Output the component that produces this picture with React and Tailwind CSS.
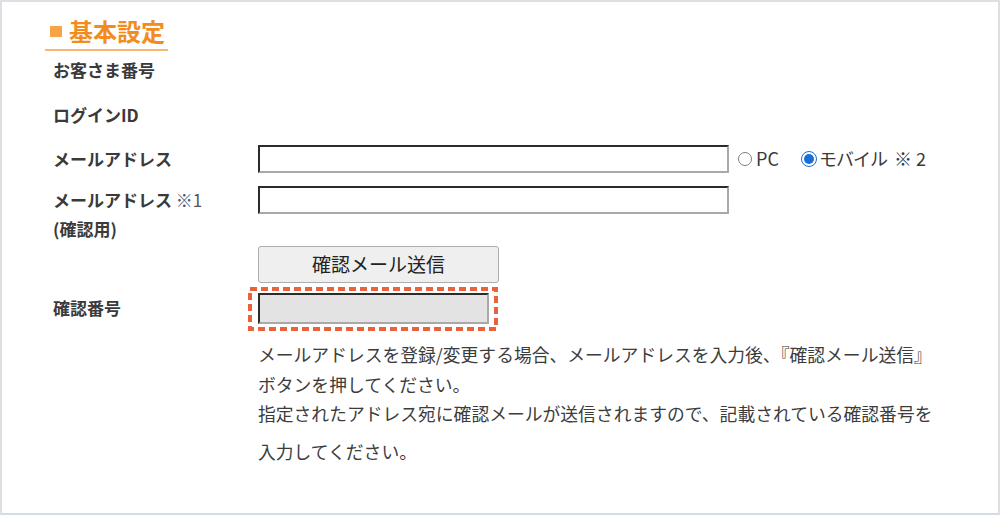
import React from "react";

const jp = { fontFamily: '"Noto Sans CJK JP", "Noto Sans", sans-serif' };

const Field = ({ className = "" }) => (
  <div
    className={`h-[28px] border-2 border-t-[#2b2b2b] border-l-[#2b2b2b] border-b-[#a9a9a9] border-r-[#a9a9a9] ${className}`}
  />
);

const Label = ({ children, className = "" }) => (
  <div className={`w-[205px] shrink-0 text-[17px] font-bold text-[#3a3a3a] ${className}`}>
    {children}
  </div>
);

const RadioOff = () => (
  <span className="inline-block h-[14px] w-[14px] rounded-full border border-[#808080] bg-white" />
);

const RadioOn = () => (
  <span className="inline-flex h-[16px] w-[16px] items-center justify-center rounded-full border border-[#1a6fd6] bg-white">
    <span className="h-[10px] w-[10px] rounded-full bg-[#1a6fd6]" />
  </span>
);

export default function App() {
  return (
    <div
      style={jp}
      className="h-[515px] w-[1000px] overflow-hidden border-2 border-[#dcdfe4] border-b-[#d2dbe8] bg-white"
    >
      <div className="pl-[43px] pt-[11px]">
        <div className="flex w-[123px] items-center border-b-2 border-[#f6b873] pl-[5px] leading-[36px]">
          <span className="mr-[7px] h-[11px] w-[12px] bg-[#f7a347]" />
          <span className="text-[24px] font-bold text-[#f28c1e]">基本設定</span>
        </div>
      </div>

      <div className="pl-[51px]">
        <div className="flex h-[38px] items-center">
          <Label>お客さま番号</Label>
        </div>
        <div className="flex h-[52px] items-center">
          <Label>ログインID</Label>
        </div>

        <div className="flex h-[35px] items-center">
          <Label>メールアドレス</Label>
          <Field className="w-[471px]" />
          <div className="ml-[9px] flex items-center text-[18px] text-[#3a3a3a]">
            <RadioOff />
            <span className="ml-[4px]">PC</span>
            <span className="ml-[22px] flex items-center">
              <RadioOn />
            </span>
            <span className="ml-[2px] tracking-[-1px]">モバイル</span>
            <span className="ml-[7px]">※</span>
            <span className="ml-[4px]">2</span>
          </div>
        </div>

        <div className="flex h-[70px] items-start">
          <Label className="pt-[9px] leading-[29px]">
            メールアドレス <span className="font-normal text-[#555]">※1</span>
            <br />
            (確認用)
          </Label>
          <Field className="mt-[10px] w-[471px]" />
        </div>

        <div className="flex h-[37px]">
          <Label />
          <button className="h-[37px] w-[241px] rounded-[3px] border border-[#adadad] bg-[#efefef] text-[19px] text-[#222]">
            確認メール送信
          </button>
        </div>

        <div className="flex h-[47px] items-center pt-[3px]">
          <Label>確認番号</Label>
          <div className="relative">
            <Field className="h-[31px] w-[231px] bg-[#e3e3e3]" />
            <svg
              className="absolute left-[-10px] top-[-6px]"
              width="250"
              height="44"
              viewBox="0 0 250 44"
            >
              <rect
                x="2"
                y="2"
                width="246"
                height="40"
                fill="none"
                stroke="#e8623a"
                strokeWidth="4"
                strokeDasharray="7 4"
              />
            </svg>
          </div>
        </div>

        <div className="mt-[10px] flex">
          <Label />
          <div className="text-[17.8px] leading-[29.5px] text-[#3c3c3c]">
            <p>
              メールアドレスを登録/変更する場合、メールアドレスを入力後、『確認メール送信』
              <br />
              ボタンを押してください。
              <br />
              指定されたアドレス宛に確認メールが送信されますので、記載されている確認番号を
            </p>
            <p className="mt-[8px]">入力してください。</p>
          </div>
        </div>
      </div>
    </div>
  );
}
